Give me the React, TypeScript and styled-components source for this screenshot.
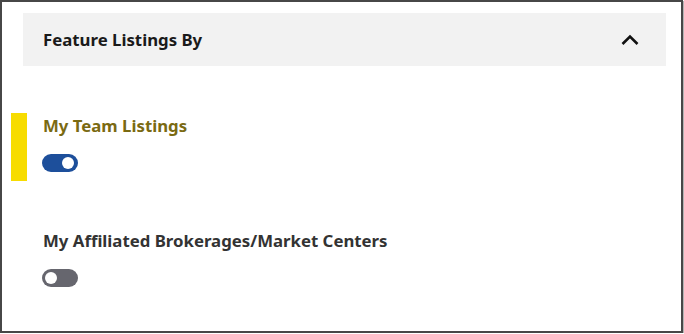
import React from "react";
import styled, { createGlobalStyle } from "styled-components";

const GlobalStyle = createGlobalStyle`
  body {
    margin: 0;
    background: #ffffff;
    font-family: "Noto Sans", "Open Sans", sans-serif;
  }
`;

const Frame = styled.div({
  boxSizing: "border-box",
  width: "683px",
  height: "333px",
  border: "2px solid #474747",
  boxShadow: "1px 1px 0 #b4b4b4",
  background: "#ffffff",
  display: "flex",
  flexDirection: "column",
  padding: "11px 15px 0 9px",
});

const Header = styled.div({
  display: "flex",
  alignItems: "center",
  justifyContent: "space-between",
  height: "53px",
  marginLeft: "12px",
  padding: "0 27px 0 20px",
  backgroundColor: "#f2f2f2",
});

const Title = styled.div({
  fontSize: "16.8px",
  lineHeight: "22px",
  fontWeight: 700,
  color: "#1a1a1a",
});

const Chevron = styled.svg({
  display: "block",
});

const List = styled.div({
  display: "flex",
  flexDirection: "column",
  gap: "47px",
  marginTop: "47px",
});

const Item = styled.div<{ $active?: boolean }>`
  display: flex;
  flex-direction: column;
  align-items: flex-start;
  gap: 17px;
  padding: 2px 0 9px 16px;
  border-left: 16px solid ${(p) => (p.$active ? "#f7dc00" : "transparent")};
`;

const Label = styled.div<{ $active?: boolean }>`
  font-size: 16.8px;
  line-height: 22px;
  font-weight: 700;
  color: ${(p) => (p.$active ? "#7a6a12" : "#333333")};
`;

const Toggle = styled.div<{ $on?: boolean }>`
  position: relative;
  width: 36px;
  height: 18px;
  margin-left: -1px;
  border-radius: 9px;
  background: ${(p) => (p.$on ? "#1d4f9b" : "#66666e")};
`;

const Knob = styled.span<{ $on?: boolean }>`
  position: absolute;
  top: 3px;
  ${(p) => (p.$on ? "right: 4px;" : "left: 3px;")}
  width: 12px;
  height: 12px;
  border-radius: 50%;
  background: #ffffff;
`;

const items = [
  { label: "My Team Listings", on: true, active: true },
  { label: "My Affiliated Brokerages/Market Centers", on: false, active: false },
];

export default function App() {
  return (
    <>
      <GlobalStyle />
      <Frame>
        <Header>
          <Title>Feature Listings By</Title>
          <Chevron width="18" height="12" viewBox="0 0 18 12">
            <polyline
              points="1.5,10 9,2.5 16.5,10"
              fill="none"
              stroke="#111111"
              strokeWidth="2.6"
            />
          </Chevron>
        </Header>
        <List>
          {items.map((it) => (
            <Item key={it.label} $active={it.active}>
              <Label $active={it.active}>{it.label}</Label>
              <Toggle $on={it.on}>
                <Knob $on={it.on} />
              </Toggle>
            </Item>
          ))}
        </List>
      </Frame>
    </>
  );
}
